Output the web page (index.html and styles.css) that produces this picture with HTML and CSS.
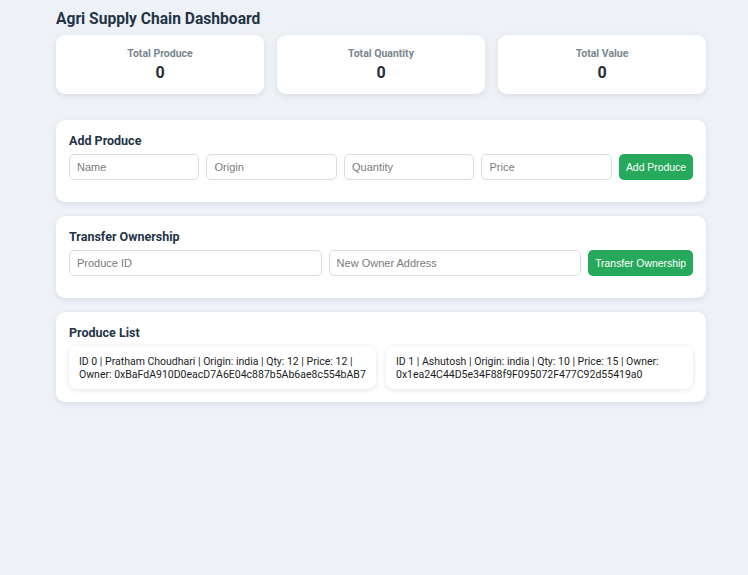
FILE: index.html
```html
<!DOCTYPE html>
<html lang="en">
<head>
<meta charset="utf-8">
<title>Agri Supply Chain Dashboard</title>
<link rel="stylesheet" href="styles.css">
</head>
<body>
<div class="container">
  <h1 class="title">Agri Supply Chain Dashboard</h1>
  <div class="stats">
    <div class="stat"><div class="stat-label">Total Produce</div><div class="stat-value">0</div></div>
    <div class="stat"><div class="stat-label">Total Quantity</div><div class="stat-value">0</div></div>
    <div class="stat"><div class="stat-label">Total Value</div><div class="stat-value">0</div></div>
  </div>
  <section class="card">
    <h2 class="card-title">Add Produce</h2>
    <div class="form-row">
      <input class="field" placeholder="Name">
      <input class="field" placeholder="Origin">
      <input class="field" placeholder="Quantity">
      <input class="field" placeholder="Price">
      <button class="btn">Add Produce</button>
    </div>
  </section>
  <section class="card">
    <h2 class="card-title">Transfer Ownership</h2>
    <div class="form-row">
      <input class="field" placeholder="Produce ID">
      <input class="field" placeholder="New Owner Address">
      <button class="btn">Transfer Ownership</button>
    </div>
  </section>
  <section class="card list-card">
    <h2 class="card-title">Produce List</h2>
    <div class="list">
      <div class="item">ID 0 | Pratham Choudhari | Origin: india | Qty: 12 | Price: 12 | Owner: 0xBaFdA910D0eacD7A6E04c887b5Ab6ae8c554bAB7</div>
      <div class="item">ID 1 | Ashutosh | Origin: india | Qty: 10 | Price: 15 | Owner: 0x1ea24C44D5e34F88f9F095072F477C92d55419a0</div>
    </div>
  </section>
</div>
</body>
</html>
```

FILE: styles.css
```css
* { box-sizing: border-box; }
html, body { margin: 0; padding: 0; }
body {
  background: #eef2f7;
  font-family: Roboto, "Noto Sans", sans-serif;
  color: #1f2d3d;
  width: 748px;
  min-height: 575px;
}
.container {
  width: 650px;
  margin-left: 56px;
  padding-top: 10px;
}
.title {
  margin: 0 0 7px 0;
  font-size: 15.6px;
  line-height: 18px;
  font-weight: 700;
  color: #243447;
}
.stats {
  display: grid;
  grid-template-columns: repeat(3, 1fr);
  gap: 13px;
  margin-bottom: 26px;
}
.stat {
  background: #fff;
  border-radius: 9px;
  height: 59px;
  box-shadow: 0 2px 6px rgba(30, 45, 70, 0.10);
  text-align: center;
  padding-top: 12px;
}
.stat-label {
  font-size: 10.5px;
  font-weight: 700;
  color: #7a868f;
  line-height: 14px;
}
.stat-value {
  font-size: 16px;
  font-weight: 700;
  color: #1f2d3d;
  line-height: 22px;
  margin-top: 1px;
}
.card {
  background: #fff;
  border-radius: 9px;
  box-shadow: 0 2px 6px rgba(30, 45, 70, 0.10);
  padding: 13px 13px 22px 13px;
  margin-bottom: 14px;
}
.card-title {
  margin: 0 0 6px 0;
  font-size: 12.5px;
  line-height: 15px;
  font-weight: 700;
  color: #243447;
}
.form-row {
  display: flex;
  gap: 7px;
}
.field {
  flex: 1;
  min-width: 0;
  height: 26px;
  border: 1px solid #d9dde2;
  border-radius: 5px;
  padding: 0 7px;
  font-family: "Liberation Sans", Arial, sans-serif;
  font-size: 11px;
  color: #333;
  background: #fff;
}
.field::placeholder { color: #7b7b7b; }
.btn {
  flex: none;
  height: 26px;
  border: none;
  border-radius: 5px;
  background: #26a95b;
  color: #fff;
  font-family: "Liberation Sans", Arial, sans-serif;
  font-size: 10.4px;
  padding: 0 7px;
}
.list-card { padding-bottom: 13px; }
.list {
  display: grid;
  grid-template-columns: 1fr 1fr;
  gap: 10px;
  margin-top: 1px;
}
.item {
  background: #fff;
  border-radius: 8px;
  box-shadow: 0 1px 5px rgba(30, 45, 70, 0.13);
  padding: 9px 10px 8px 10px;
  font-size: 10.5px;
  line-height: 13px;
  color: #1a1d24;
  min-height: 43px;
}
```
